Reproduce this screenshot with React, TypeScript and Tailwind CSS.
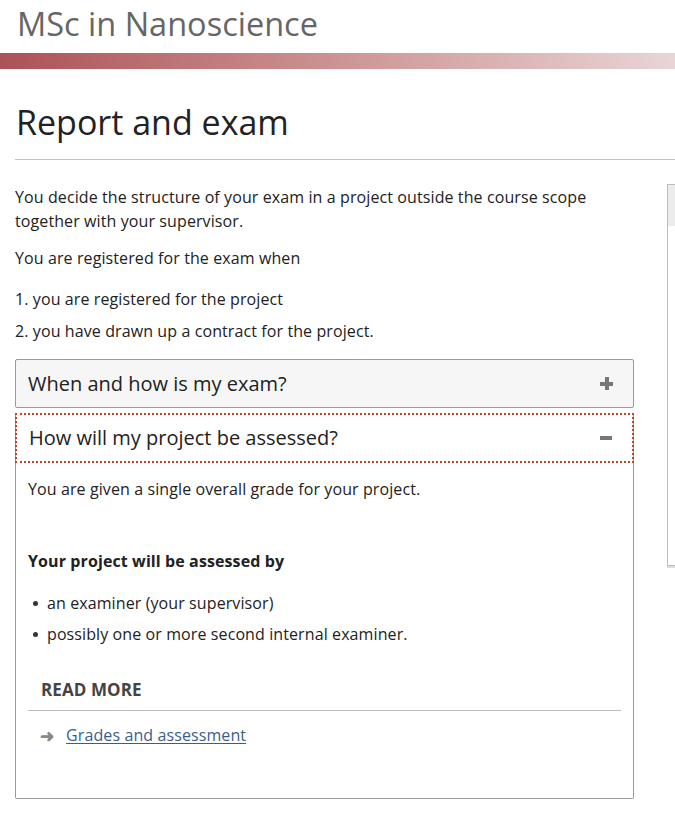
export default function App() {
  return (
    <div className="min-h-[828px] overflow-hidden bg-white font-['Open_Sans',sans-serif] text-[#222]">
      <header>
        <p className="px-[17px] pt-[2px] text-[32.5px] leading-[44px] text-[#666]">MSc in Nanoscience</p>
        <div className="mt-[7px] h-4 bg-gradient-to-r from-[#ab5256] to-[#e9d5d6]" />
      </header>

      <div className="flex gap-[33px] pl-[15px] pt-[29px]">
        <main className="w-[619px] shrink-0">
          <h1 className="pl-[1px] text-[34px] leading-[48px] text-[#222]">Report and exam</h1>
          <div className="mt-[13px] mr-[-60px] border-t border-[#c2c2c2]" />

          <div className="mt-[25px] text-[16px] leading-[24px] tracking-[0.1px]">
            <p>You decide the structure of your exam in a project outside the course scope together with your supervisor.</p>
            <p className="mt-[13px]">You are registered for the exam when</p>
            <ol className="mt-[17px] space-y-[8px]">
              <li>1. you are registered for the project</li>
              <li>2. you have drawn up a contract for the project.</li>
            </ol>
          </div>

          <div className="mt-[16px]">
            <button
              type="button"
              className="flex h-[49px] w-full items-center justify-between rounded-[2px] border border-[#9a9a9a] bg-[#f6f6f6] pl-[12px] pr-[20px] text-left text-[20px] font-medium text-[#222]"
            >
              <span>When and how is my exam?</span>
              <span className="relative h-[13px] w-[13px]">
                <span className="absolute left-0 top-[5px] h-[3.5px] w-[13px] bg-[#777]" />
                <span className="absolute left-[5px] top-0 h-[13px] w-[3.5px] bg-[#777]" />
              </span>
            </button>

            <div className="mt-[5px] rounded-b-[2px] border-x border-b border-[#9a9a9a]">
              <button
                type="button"
                className="-mx-px flex h-[50px] w-[calc(100%+2px)] items-center justify-between border-2 border-dotted border-[#c0442a] pl-[12px] pr-[20px] text-left text-[20px] font-medium text-[#222]"
              >
                <span>How will my project be assessed?</span>
                <span className="h-[3.5px] w-[12px] bg-[#777]" />
              </button>

              <div className="px-[12px] pb-[51px] pt-[14px] text-[16px] leading-[24px] tracking-[0.1px]">
                <p>You are given a single overall grade for your project.</p>
                <p className="mt-[48px] font-bold">Your project will be assessed by</p>
                <ul className="mt-[18px] space-y-[7px] pl-[5px]">
                  {['an examiner (your supervisor)', 'possibly one or more second internal examiner.'].map((item) => (
                    <li className="flex items-center gap-[9px]" key={item}>
                      <span className="h-[5px] w-[5px] rounded-full bg-[#333]" />
                      <span>{item}</span>
                    </li>
                  ))}
                </ul>

                <p className="mt-[32px] pl-[13px] text-[17px] font-bold uppercase text-[#444]">Read more</p>
                <div className="mt-[8px] border-t border-[#bcbcbc]" />
                <a className="mt-[12px] flex items-center gap-[12px] pl-[12px]" href="#">
                  <span className="text-[17px] font-bold leading-none text-[#888]">➜</span>
                  <span className="text-[#3a5e8c] underline underline-offset-2">Grades and assessment</span>
                </a>
              </div>
            </div>
          </div>
        </main>

        <aside className="mt-[86px] h-[382px] w-[40px] shrink-0 border border-[#bdbdbd] shadow-[0_2px_0_#ddd]">
          <div className="h-[41px] bg-[#ececec]" />
        </aside>
      </div>
    </div>
  )
}
